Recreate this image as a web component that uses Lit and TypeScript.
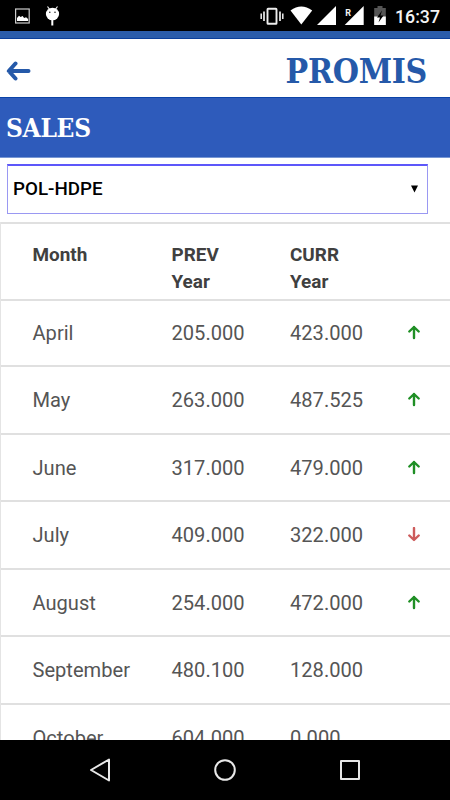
import { LitElement, html, css, svg } from "lit";
import { customElement, property } from "lit/decorators.js";

type Trend = "up" | "down" | "";
interface Row { month: string; prev: string; curr: string; trend: Trend; }

const ROWS: Row[] = [
  { month: "April", prev: "205.000", curr: "423.000", trend: "up" },
  { month: "May", prev: "263.000", curr: "487.525", trend: "up" },
  { month: "June", prev: "317.000", curr: "479.000", trend: "up" },
  { month: "July", prev: "409.000", curr: "322.000", trend: "down" },
  { month: "August", prev: "254.000", curr: "472.000", trend: "up" },
  { month: "September", prev: "480.100", curr: "128.000", trend: "" },
  { month: "October", prev: "604.000", curr: "0.000", trend: "" },
];

@customElement("status-bar")
export class StatusBar extends LitElement {
  static styles = css`
    :host { display: block; flex: none; height: 31px; background: #000; }
    .icons { display: block; }
    .clock { font: 500 18px Roboto, sans-serif; fill: #f4f4f4; }
    .roam { font: 700 9px Roboto, sans-serif; fill: #f4f4f4; }
  `;
  render() {
    return html`<svg class="icons" width="450" height="31" viewBox="0 0 450 31">
      <rect x="15.6" y="9" width="13.6" height="14" fill="none" stroke="#ccc" stroke-width="1.2" />
      <path d="M17 21v-3l2-2.3 1.6 1.3 2-1 1.5 2 2-.8 2 1.8v2z" fill="#fff" />
      <path d="M47.5 6.5l2.2 3M57.5 6.5l-2.2 3" stroke="#eee" stroke-width="1.2" />
      <ellipse cx="52.5" cy="14" rx="6.6" ry="6.3" fill="#fff" />
      <path d="M52.3 19v6.5" stroke="#fff" stroke-width="2" />
      <circle cx="49.8" cy="12.3" r=".8" fill="#222" /><circle cx="55" cy="12.3" r=".8" fill="#222" />
      <rect x="267.5" y="8.8" width="9" height="15" rx=".6" fill="none" stroke="#eee" stroke-width="1.9" />
      <path d="M264 11.5v9.5M280 11.5v9.5" stroke="#eee" stroke-width="1.7" />
      <path d="M261.2 13.5v5.5M282.8 13.5v5.5" stroke="#eee" stroke-width="1.5" />
      <path d="M290.5 10.5Q301.3 2.5 312.2 10.5L301.3 24.5z" fill="#fff" />
      <path d="M336 6v19h-19z" fill="#fff" />
      <path d="M363.7 6v19h-19z" fill="#fff" />
      <path d="M344.5 6h7.5v10h-7.5z" fill="#000" />
      <text class="roam" x="345.2" y="15.5">R</text>
      <path d="M374.2 8h3.3V6h5v2h3.3v17h-11.6z" fill="#555" />
      <path d="M374.2 16.5h11.6v8.5h-11.6z" fill="#fff" />
      <path d="M382 10.5l-5 7h3l-1.5 5 5-7h-3z" fill="#000" />
      <text class="clock" x="395" y="22.7" textLength="45" lengthAdjust="spacingAndGlyphs">16:37</text>
    </svg>`;
  }
}

@customElement("app-header")
export class AppHeader extends LitElement {
  static styles = css`
    :host { display: block; flex: none; font-family: "DejaVu Serif Condensed", "DejaVu Serif", serif; font-stretch: condensed; font-weight: 700; }
    .stripe { height: 8px; box-sizing: border-box; background: #2a5caa; border-bottom: 1px solid #0b3f9b; }
    .brand { height: 58px; box-sizing: border-box; display: flex; align-items: center; justify-content: space-between; padding: 6px 23px 0 6px; background: #fff; }
    .name { font-size: 33.5px; line-height: 42px; padding-top: 2px; letter-spacing: -0.3px; color: #2559a9; }
    .title { height: 61px; box-sizing: border-box; background: #2e5bbb; border-top: 1px solid #0b44a8; border-bottom: 1px solid #7897d4; color: #fff; font-size: 26px; line-height: 60px; letter-spacing: -0.3px; padding-left: 6px; }
  `;
  render() {
    return html`<div class="stripe"></div>
      <div class="brand">
        <svg width="25" height="20" viewBox="0 0 25 20"><path d="M9.5 2.5L2.8 10l6.7 7.5M3 10h19.5" fill="none" stroke="#2559a9" stroke-width="4" stroke-linecap="round" stroke-linejoin="round" /></svg>
        <span class="name">PROMIS</span>
      </div>
      <div class="title">SALES</div>`;
  }
}

@customElement("product-select")
export class ProductSelect extends LitElement {
  @property() value = "";
  static styles = css`
    :host { display: block; flex: none; padding: 6px 22px 8px 7px; }
    .box { height: 50px; box-sizing: border-box; border: 1px solid #9a98f2; border-top: 2px solid #5d57fa; display: flex; align-items: center; justify-content: space-between; padding: 0 9px 2px 5px; font: 500 18.8px/24px Roboto, sans-serif; color: #000; }
  `;
  render() {
    return html`<div class="box"><span>${this.value}</span>
      <svg width="7" height="8" viewBox="0 0 7 8"><path d="M0 .5h7L3.5 7.5z" /></svg></div>`;
  }
}

@customElement("sales-table")
export class SalesTable extends LitElement {
  @property({ attribute: false }) rows: Row[] = [];
  static styles = css`
    :host { display: block; flex: 1; min-height: 0; overflow: hidden; border-left: 1px solid #e4e4e4; font: 400 20.1px/27px Roboto, sans-serif; color: #555; }
    .row { display: grid; grid-template-columns: 139px 118.5px 117px 1fr; padding: 2px 0 0 31.5px; box-sizing: border-box; height: 67.5px; border-bottom: 2px solid #e0e0e0; align-items: center; }
    .row.head { height: 79px; border-top: 2px solid #e0e0e0; align-items: start; padding-top: 16.5px; font-weight: 700; font-size: 18.9px; color: #404040; }
    .head + .row { height: 66px; padding-top: 0; }
    .arrow { display: block; margin-bottom: 2px; }
    .up { stroke: #1f8f25; }
    .down { stroke: #cd5c5c; }
  `;
  arrow(t: Trend) {
    if (!t) return "";
    const d = t === "up" ? "M7 13V2M2.3 6.5L7 2l4.7 4.5" : "M7 1v11M2.3 8.5L7 13l4.7-4.5";
    return html`<svg class="arrow ${t}" width="14" height="15" viewBox="0 0 14 15" fill="none" stroke-width="2.4" stroke-linecap="round" stroke-linejoin="round">${svg`<path d=${d} />`}</svg>`;
  }
  render() {
    return html`<div class="row head"><span>Month</span><span>PREV<br />Year</span><span>CURR<br />Year</span></div>
      ${this.rows.map((r) => html`<div class="row"><span>${r.month}</span><span>${r.prev}</span><span>${r.curr}</span>${this.arrow(r.trend)}</div>`)}`;
  }
}

@customElement("nav-bar")
export class NavBar extends LitElement {
  static styles = css`
    :host { display: flex; flex: none; height: 60px; background: #000; align-items: center; justify-content: center; gap: 101px; }
    .key { fill: none; stroke: #e8e8e8; stroke-width: 2; stroke-linejoin: round; }
  `;
  render() {
    return html`<svg class="key" width="24" height="26" viewBox="0 0 24 26"><path d="M21 2.5v21L3 13z" /></svg>
      <svg class="key" width="24" height="24" viewBox="0 0 24 24"><circle cx="12" cy="12" r="9.8" /></svg>
      <svg class="key" width="24" height="24" viewBox="0 0 24 24"><rect x="3" y="3" width="18" height="18" /></svg>`;
  }
}

@customElement("app-root")
export class AppRoot extends LitElement {
  static styles = css`
    :host { display: flex; flex-direction: column; width: 450px; height: 800px; overflow: hidden; background: #fff; }
  `;
  render() {
    return html`<status-bar></status-bar><app-header></app-header>
      <product-select value="POL-HDPE"></product-select>
      <sales-table .rows=${ROWS}></sales-table><nav-bar></nav-bar>`;
  }
}
